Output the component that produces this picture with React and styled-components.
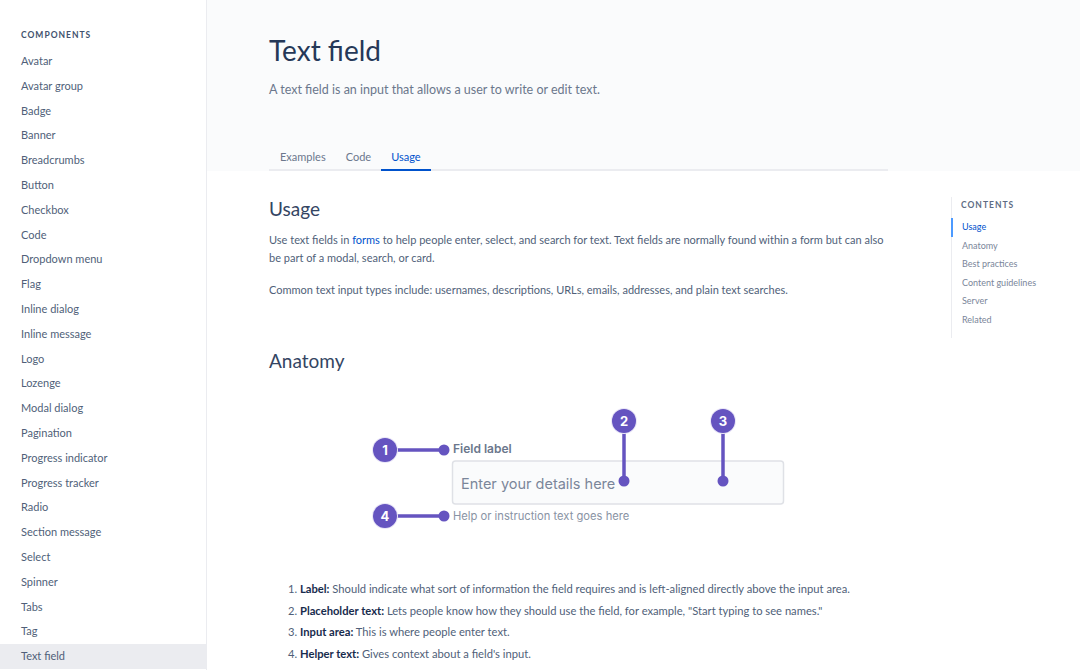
import styled, { createGlobalStyle } from "styled-components";

const GlobalStyle = createGlobalStyle`
  html, body {
    margin: 0;
    padding: 0;
    background: #ffffff;
    font-family: "Lato", "Liberation Sans", sans-serif;
    color: #42526e;
  }
  * { box-sizing: border-box; }
`;

const Page = styled.div`
  display: flex;
  width: 1080px;
  height: 670px;
  overflow: hidden;
`;

const Sidebar = styled.nav`
  width: 207px;
  flex-shrink: 0;
  border-right: 1px solid #ebecf0;
  padding-top: 28px;
`;

const SideTitle = styled.div`
  padding-left: 21px;
  font-size: 8.5px;
  font-weight: 700;
  letter-spacing: 1px;
  color: #42526e;
  line-height: 14px;
  margin-bottom: 7px;
`;

const SideItem = styled.div`
  padding-left: 21px;
  height: 24.8px;
  line-height: 24.8px;
  font-size: 11px;
  color: #505f79;
  background: ${(p) => (p.$active ? "#ebecf0" : "transparent")};
`;

const Main = styled.main`
  flex: 1;
  display: flex;
  flex-direction: column;
`;

const Header = styled.header`
  background: #fafbfc;
  height: 171px;
  padding: 31px 0 0 62px;
`;

const Title = styled.h1`
  margin: 0;
  font-size: 28px;
  line-height: 38px;
  font-weight: 400;
  color: #253858;
`;

const Subtitle = styled.p`
  margin: 12px 0 0;
  font-size: 12.5px;
  line-height: 18px;
  color: #6b778c;
`;

const Tabs = styled.div`
  display: flex;
  width: 619px;
  margin-top: 45px;
  border-bottom: 2px solid #ebecf0;
`;

const Tab = styled.div`
  padding: 0 10px;
  height: 27px;
  line-height: 25px;
  font-size: 11px;
  color: ${(p) => (p.$active ? "#0052cc" : "#6b778c")};
  box-shadow: ${(p) => (p.$active ? "inset 0 -2px 0 #0052cc" : "none")};
  margin-bottom: -2px;
  &:first-child { padding-left: 11px; }
`;

const Body = styled.div`
  display: flex;
  padding-left: 62px;
`;

const Content = styled.section`
  width: 619px;
  flex-shrink: 0;
`;

const H2 = styled.h2`
  margin: ${(p) => p.$top}px 0 0;
  font-size: 19px;
  line-height: 24px;
  font-weight: 400;
  color: #344563;
`;

const Para = styled.p`
  margin: ${(p) => p.$top}px 0 0;
  font-size: 11px;
  line-height: 18px;
  color: #505f79;
`;

const Link = styled.a`
  color: #0052cc;
  text-decoration: none;
`;

const Diagram = styled.div`
  display: flex;
  justify-content: center;
  margin-top: 27px;
`;

const List = styled.ol`
  margin: 38px 0 0;
  padding-left: 31px;
  font-size: 11.2px;
  line-height: 21.5px;
  color: #505f79;
  b { color: #172b4d; }
`;

const Toc = styled.aside`
  margin-left: 63px;
  margin-top: 26px;
  border-left: 1px solid #ebecf0;
  padding-bottom: 8px;
  height: fit-content;
`;

const TocTitle = styled.div`
  padding-left: 9px;
  font-size: 8.5px;
  font-weight: 700;
  letter-spacing: 1px;
  line-height: 16px;
  color: #5e6c84;
  margin-bottom: 5px;
`;

const TocItem = styled.div`
  padding-left: 9px;
  margin-left: -1px;
  font-size: 9px;
  line-height: 18.6px;
  color: ${(p) => (p.$active ? "#0052cc" : "#7a869a")};
  border-left: 2px solid ${(p) => (p.$active ? "#4c9aff" : "transparent")};
`;

const components = [
  "Avatar", "Avatar group", "Badge", "Banner", "Breadcrumbs", "Button",
  "Checkbox", "Code", "Dropdown menu", "Flag", "Inline dialog",
  "Inline message", "Logo", "Lozenge", "Modal dialog", "Pagination",
  "Progress indicator", "Progress tracker", "Radio", "Section message",
  "Select", "Spinner", "Tabs", "Tag", "Text field",
];

const toc = ["Usage", "Anatomy", "Best practices", "Content guidelines", "Server", "Related"];

const PURPLE = "#6554c0";

const Marker = ({ x, y, n }) => (
  <g>
    <circle cx={x} cy={y} r="13" fill="#e9e6f7" />
    <circle cx={x} cy={y} r="12" fill={PURPLE} />
    <text x={x} y={y + 4.5} textAnchor="middle" fontSize="13" fontWeight="700" fill="#fff"
      fontFamily="Inter, 'Liberation Sans', sans-serif">{n}</text>
  </g>
);

const AnatomyDrawing = () => (
  <svg width="420" height="140" viewBox="0 0 420 140">
    <rect x="83.5" y="61" width="331" height="43" rx="3" fill="#fafbfc" stroke="#dfe1e6" strokeWidth="1.5" />
    <g fontFamily="Inter, 'Liberation Sans', sans-serif">
      <text x="84" y="53" fontSize="12" fontWeight="600" fill="#6b778c">Field label</text>
      <text x="92" y="88.5" fontSize="14.5" fill="#7a869a">Enter your details here</text>
      <text x="84" y="120" fontSize="11.2" fill="#8993a4">Help or instruction text goes here</text>
    </g>
    <g stroke={PURPLE} strokeWidth="3.5" strokeLinecap="round">
      <line x1="16" y1="50" x2="75" y2="50" />
      <line x1="16" y1="116" x2="75" y2="116" />
      <line x1="255" y1="21" x2="255" y2="81" />
      <line x1="354" y1="21" x2="354" y2="81" />
    </g>
    <g fill={PURPLE}>
      <circle cx="75" cy="50" r="5.5" />
      <circle cx="75" cy="116" r="5.5" />
      <circle cx="255" cy="81" r="5.5" />
      <circle cx="354" cy="81" r="5.5" />
    </g>
    <Marker x={16} y={50} n="1" />
    <Marker x={16} y={116} n="4" />
    <Marker x={255} y={21} n="2" />
    <Marker x={354} y={21} n="3" />
  </svg>
);

export default function App() {
  return (
    <>
      <GlobalStyle />
      <Page>
        <Sidebar>
          <SideTitle>COMPONENTS</SideTitle>
          {components.map((c) => (
            <SideItem key={c} $active={c === "Text field"}>{c}</SideItem>
          ))}
        </Sidebar>
        <Main>
          <Header>
            <Title>Text field</Title>
            <Subtitle>A text field is an input that allows a user to write or edit text.</Subtitle>
            <Tabs>
              <Tab>Examples</Tab>
              <Tab>Code</Tab>
              <Tab $active>Usage</Tab>
            </Tabs>
          </Header>
          <Body>
            <Content>
              <H2 $top={26}>Usage</H2>
              <Para $top={10}>
                Use text fields in <Link href="#">forms</Link> to help people enter, select, and search for text. Text fields are normally found within a form but can also be part of a modal, search, or card.
              </Para>
              <Para $top={14}>
                Common text input types include: usernames, descriptions, URLs, emails, addresses, and plain text searches.
              </Para>
              <H2 $top={50}>Anatomy</H2>
              <Diagram>
                <AnatomyDrawing />
              </Diagram>
              <List>
                <li><b>Label:</b> Should indicate what sort of information the field requires and is left-aligned directly above the input area.</li>
                <li><b>Placeholder text:</b> Lets people know how they should use the field, for example, "Start typing to see names."</li>
                <li><b>Input area:</b> This is where people enter text.</li>
                <li><b>Helper text:</b> Gives context about a field's input.</li>
              </List>
            </Content>
            <Toc>
              <TocTitle>CONTENTS</TocTitle>
              {toc.map((t) => (
                <TocItem key={t} $active={t === "Usage"}>{t}</TocItem>
              ))}
            </Toc>
          </Body>
        </Main>
      </Page>
    </>
  );
}
